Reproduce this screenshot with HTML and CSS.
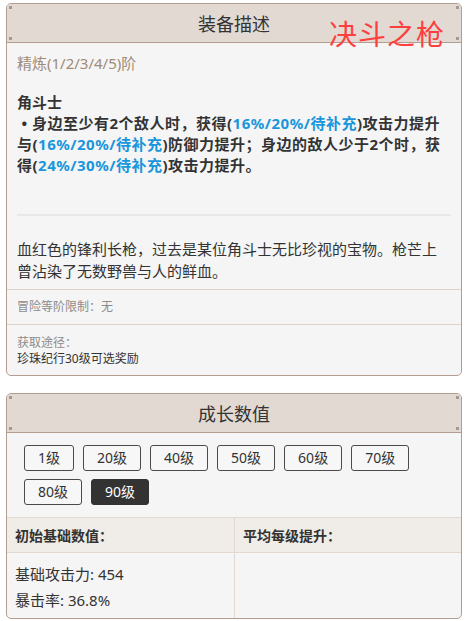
FILE: index.html
```html
<!DOCTYPE html>
<html lang="zh-CN">
<head>
<meta charset="utf-8">
<title>决斗之枪</title>
<link rel="stylesheet" href="styles.css">
</head>
<body>
<div class="page">
  <section class="card">
    <div class="card-head">
      <span class="dot dot-tl"></span><span class="dot dot-bl"></span>
      <span class="dot dot-tr"></span><span class="dot dot-br"></span>
      <h2 class="card-title">装备描述</h2>
    </div>
    <div class="watermark">决斗之枪</div>
    <div class="desc-block">
      <p class="refine">精炼(1/2/3/4/5)阶</p>
      <p class="skill-name">角斗士</p>
      <p class="skill-desc">&nbsp;• 身边至少有2个敌人时，获得(<span class="hl">16%/20%/待补充</span>)攻击力提升与(<span class="hl">16%/20%/待补充</span>)防御力提升；身边的敌人少于2个时，获得(<span class="hl">24%/30%/待补充</span>)攻击力提升。</p>
      <hr class="divider">
      <p class="lore">血红色的锋利长枪，过去是某位角斗士无比珍视的宝物。枪芒上曾沾染了无数野兽与人的鲜血。</p>
    </div>
    <div class="meta">冒险等阶限制：无</div>
    <div class="meta meta-last">
      <div>获取途径：</div>
      <div class="meta-value">珍珠纪行30级可选奖励</div>
    </div>
  </section>

  <section class="card card-second">
    <div class="card-head">
      <span class="dot dot-tl"></span><span class="dot dot-bl"></span>
      <span class="dot dot-tr"></span><span class="dot dot-br"></span>
      <h2 class="card-title">成长数值</h2>
    </div>
    <div class="levels">
      <button class="lvl">1级</button>
      <button class="lvl">20级</button>
      <button class="lvl">40级</button>
      <button class="lvl">50级</button>
      <button class="lvl">60级</button>
      <button class="lvl">70级</button>
      <button class="lvl">80级</button>
      <button class="lvl active">90级</button>
    </div>
    <div class="stats">
      <div class="stats-th">初始基础数值：</div>
      <div class="stats-th stats-right">平均每级提升：</div>
      <div class="stats-td">
        <div class="stat-row">基础攻击力: 454</div>
        <div class="stat-row">暴击率: 36.8%</div>
      </div>
      <div class="stats-td stats-right"></div>
    </div>
  </section>
</div>
</body>
</html>
```

FILE: styles.css
```css
* { box-sizing: border-box; }
html, body { margin: 0; padding: 0; background: #ffffff; }
body {
  font-family: "Noto Sans", "Noto Sans CJK SC", sans-serif;
  color: #333333;
  font-size: 15px;
}
.page {
  padding: 3px 3px 0 6px;
  display: flex;
  flex-direction: column;
  gap: 17px;
}
.card {
  position: relative;
  border: 1px solid #b39d90;
  border-radius: 5px;
  background: #f5f5f5;
  overflow: hidden;
}
.card-head {
  position: relative;
  height: 39px;
  background: #e1d9d2;
  border-bottom: 1px solid #b39d90;
  display: flex;
  align-items: center;
  justify-content: center;
}
.card-title {
  margin: 0;
  font-weight: normal;
  font-size: 18px;
  line-height: 24px;
  color: #333333;
  font-family: "Noto Sans CJK SC", sans-serif;
}
.dot {
  position: absolute;
  width: 3px;
  height: 3px;
  background: #a59a93;
}
.dot-tl { left: 2px; top: 2px; }
.dot-bl { left: 2px; bottom: 2px; }
.dot-tr { right: 2px; top: 2px; }
.dot-br { right: 2px; bottom: 2px; }
.watermark {
  position: absolute;
  right: 16px;
  top: 13px;
  font-family: "Noto Sans CJK SC", sans-serif;
  font-size: 28px;
  line-height: 32px;
  color: #ff3e3e;
  letter-spacing: 1px;
}
.desc-block {
  padding: 10px 10px 7px 10px;
}
.desc-block p { margin: 0; }
.refine {
  color: #a08b78;
  font-size: 15px;
  line-height: 21px;
}
.skill-name {
  margin-top: 18px !important;
  font-weight: bold;
  line-height: 21px;
}
.skill-desc {
  font-weight: bold;
  line-height: 21px;
  letter-spacing: 0.5px;
}
.hl { color: #1996dc; }
.divider {
  margin: 38px 0 0 0;
  border: none;
  height: 2px;
  background: #e8e8e8;
}
.lore {
  margin-top: 22px !important;
  line-height: 22px;
  color: #333333;
}
.meta {
  border-top: 1px solid #ddd3ca;
  padding: 8px 10px 8px 10px;
  font-size: 12px;
  line-height: 18px;
  color: #8c8c8c;
}
.meta-last {
  padding: 10px 10px 8px 10px;
  line-height: 16px;
}
.meta-value { color: #333333; }
.levels {
  display: flex;
  flex-wrap: wrap;
  gap: 8px 9px;
  padding: 12px 40px 12px 17px;
}
.lvl {
  font-family: "Noto Sans", "Noto Sans CJK SC", sans-serif;
  font-size: 14px;
  line-height: 24px;
  height: 26px;
  padding: 0 13px;
  border: 1px solid #4a4a4a;
  border-radius: 3px;
  background: #f7f7f7;
  color: #333333;
}
.lvl.active {
  background: #333333;
  border-color: #333333;
  color: #ffffff;
}
.stats {
  display: grid;
  grid-template-columns: 1fr 1fr;
  border-top: 1px solid #e2d8cf;
}
.stats-th {
  background: #f0ece7;
  height: 35px;
  border-bottom: 1px solid #e2d8cf;
  padding: 0 8px;
  display: flex;
  align-items: center;
  font-weight: bold;
  font-size: 14px;
}
.stats-right { border-left: 1px solid #e2d8cf; }
.stats-td {
  padding: 8px 8px 5px 8px;
}
.stat-row {
  line-height: 26px;
  font-size: 15px;
}
```
